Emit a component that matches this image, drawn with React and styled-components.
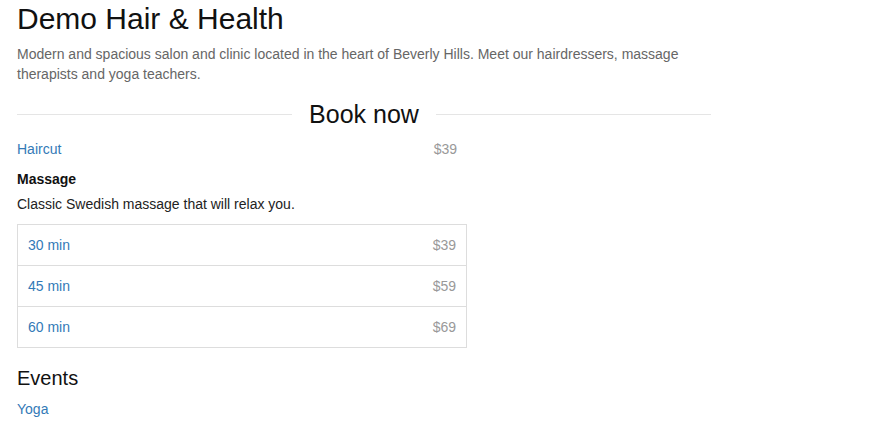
import { createGlobalStyle, styled } from 'styled-components';

const GlobalStyle = createGlobalStyle`
  body {
    margin: 0;
    background: #fff;
    font-family: "Liberation Sans", Arial, sans-serif;
    font-size: 14px;
    line-height: 20px;
    color: #333;
  }
`;

const durations = [
  { label: '30 min', price: '$39' },
  { label: '45 min', price: '$59' },
  { label: '60 min', price: '$69' },
];

const App = () => (
  <>
    <GlobalStyle />
    <Page>
      <Title>Demo Hair &amp; Health</Title>
      <Intro>
        Modern and spacious salon and clinic located in the heart of Beverly Hills. Meet our
        hairdressers, massage therapists and yoga teachers.
      </Intro>
      <Divider>
        <Rule />
        <DividerTitle>Book now</DividerTitle>
        <Rule />
      </Divider>
      <ServiceRow>
        <Link href="#">Haircut</Link>
        <Price>$39</Price>
      </ServiceRow>
      <ServiceName>Massage</ServiceName>
      <ServiceText>Classic Swedish massage that will relax you.</ServiceText>
      <OptionList>
        {durations.map((d) => (
          <OptionRow key={d.label}>
            <Link href="#">{d.label}</Link>
            <Price>{d.price}</Price>
          </OptionRow>
        ))}
      </OptionList>
      <SectionTitle>Events</SectionTitle>
      <EventLink href="#">Yoga</EventLink>
    </Page>
  </>
);

const Page = styled.div`
  width: 694px;
  padding: 2px 0 0 17px;
  display: flex;
  flex-direction: column;
`;

const Title = styled.h1`
  margin: 0;
  font-size: 30px;
  line-height: 33px;
  font-weight: 400;
  color: #111;
`;

const Intro = styled.p`
  margin: 9px 0 0;
  color: #666;
`;

const Divider = styled.div`
  margin-top: 17px;
  display: flex;
  align-items: center;
  gap: 17px;
`;

const Rule = styled.div`
  flex: 1;
  height: 1px;
  background: #e5e5e5;
`;

const DividerTitle = styled.h3`
  margin: 0;
  font-size: 25px;
  line-height: 26px;
  font-weight: 400;
  color: #111;
`;

const ServiceRow = styled.div`
  margin-top: 12px;
  width: 440px;
  display: flex;
  justify-content: space-between;
`;

const Link = styled.a`
  color: #337ab7;
  text-decoration: none;
`;

const Price = styled.span`
  color: #999;
`;

const ServiceName = styled.h4`
  margin: 10px 0 0;
  font-size: 14px;
  line-height: 20px;
  font-weight: 700;
  color: #111;
`;

const ServiceText = styled.p`
  margin: 5px 0 0;
  color: #222;
`;

const OptionList = styled.div`
  margin-top: 10px;
  width: 448px;
  border: 1px solid #ddd;
`;

const OptionRow = styled.div`
  height: 40px;
  padding: 0 10px;
  display: flex;
  align-items: center;
  justify-content: space-between;

  & + & {
    border-top: 1px solid #ddd;
  }
`;

const SectionTitle = styled.h2`
  margin: 19px 0 0;
  font-size: 20px;
  line-height: 22px;
  font-weight: 400;
  color: #111;
`;

const EventLink = styled(Link)`
  margin-top: 10px;
  align-self: flex-start;
`;

export default App;
